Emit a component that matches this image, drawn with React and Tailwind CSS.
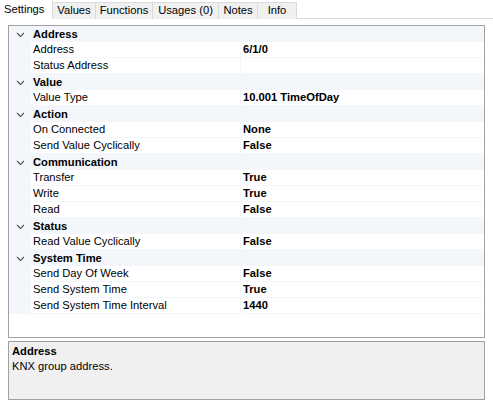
const tabs = ['Settings', 'Values', 'Functions', 'Usages (0)', 'Notes', 'Info']
const tabWidths = [53, 43, 57, 66, 39, 39]

const groups = [
  { name: 'Address', rows: [['Address', '6/1/0'], ['Status Address', '']] },
  { name: 'Value', rows: [['Value Type', '10.001 TimeOfDay']] },
  { name: 'Action', rows: [['On Connected', 'None'], ['Send Value Cyclically', 'False']] },
  { name: 'Communication', rows: [['Transfer', 'True'], ['Write', 'True'], ['Read', 'False']] },
  { name: 'Status', rows: [['Read Value Cyclically', 'False']] },
  {
    name: 'System Time',
    rows: [
      ['Send Day Of Week', 'False'],
      ['Send System Time', 'True'],
      ['Send System Time Interval', '1440'],
    ],
  },
]

function Chevron() {
  return (
    <svg width="9" height="6" viewBox="0 0 9 6" className="shrink-0">
      <path d="M1 1 L4.5 4.5 L8 1" fill="none" stroke="#555" strokeWidth="1.2" />
    </svg>
  )
}

export default function App() {
  return (
    <div
      className="w-[493px] h-[405px] bg-white text-[11.2px] leading-none text-black overflow-hidden"
      style={{ fontFamily: '"Liberation Sans", Arial, sans-serif' }}
    >
      {/* Tab strip */}
      <div className="flex h-[19px] border-b border-[#dadada]">
        {tabs.map((t, i) => (
          <div
            key={t}
            style={{ width: tabWidths[i] }}
            className={
              i === 0
                ? 'h-[19px] bg-white border-r border-[#dadada] flex items-center pl-[4px] -mb-px'
                : 'h-[17px] mt-[2px] bg-[#f0f0f0] border-r border-t border-[#dadada] flex items-center justify-center'
            }
          >
            {t}
          </div>
        ))}
      </div>

      <div className="px-[8px] pt-[6px]">
        {/* Property grid */}
        <div className="h-[313px] border border-[#a0a0a0] bg-white">
          {groups.map((g) => (
            <div key={g.name}>
              <div className="flex h-[16px] items-center bg-[#f3f6fa] pt-px">
                <div className="w-[22px] flex justify-center pl-[1px]">
                  <Chevron />
                </div>
                <span className="font-bold pl-[2px]">{g.name}</span>
              </div>
              {g.rows.map(([label, value]) => (
                <div key={label} className="flex h-[16px] bg-[#f3f6fa]">
                  <div className="w-[22px]" />
                  <div className="w-[209px] bg-white border-b border-[#f3f6fa] flex items-center pl-[2px] pt-px">
                    {label}
                  </div>
                  <div className="flex-1 bg-white border-l border-b border-[#f3f6fa] flex items-center pl-[2px] pt-px font-bold">
                    {value}
                  </div>
                </div>
              ))}
            </div>
          ))}
        </div>

        {/* Description */}
        <div className="mt-[3px] h-[59px] border border-[#a0a0a0] bg-[#f0f0f0] px-[3px] pt-[4px]">
          <div className="font-bold">Address</div>
          <div className="mt-[4px]">KNX group address.</div>
        </div>
      </div>
    </div>
  )
}
